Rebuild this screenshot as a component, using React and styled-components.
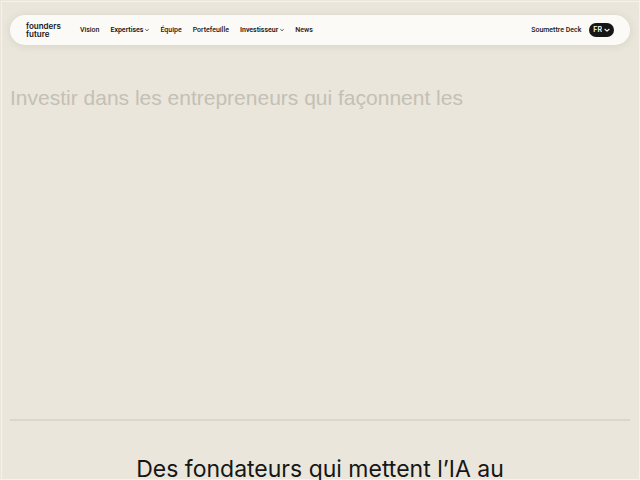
import React from 'react';
import styled, { createGlobalStyle } from 'styled-components'

const GlobalStyle = createGlobalStyle`
  * { box-sizing: border-box; }
  body {
    margin: 0;
    background: #eae6db;
    color: #161616;
    font-family: Inter, 'Liberation Sans', sans-serif;
  }
`

const menu = [
  { label: 'Vision' },
  { label: 'Expertises', sub: true },
  { label: 'Équipe' },
  { label: 'Portefeuille' },
  { label: 'Investisseur', sub: true },
  { label: 'News' },
]

const Chevron = ({ size }) => (
  <svg
    width={size}
    height={size}
    viewBox="0 0 8 8"
    fill="none"
    stroke="currentColor"
    strokeWidth="1.4"
    strokeLinecap="round"
    strokeLinejoin="round"
    aria-hidden="true"
  >
    <path d="M1.2 3L4 5.6L6.8 3" />
  </svg>
)

const App = () => {
  return (
    <Page>
      <GlobalStyle />
      <Header>
        <Logo href="#">
          <span>founders</span>
          <span>future</span>
        </Logo>
        <Nav>
          {menu.map(item => (
            item.sub ? (
              <NavButton key={item.label} type="button">
                {item.label}
                <Chevron size={4} />
              </NavButton>
            ) : (
              <NavLink key={item.label} href="#">{item.label}</NavLink>
            )
          ))}
        </Nav>
        <NavLink href="#">Soumettre Deck</NavLink>
        <Language>
          <select aria-label="Langue" defaultValue="FR">
            <option>FR</option>
            <option>EN</option>
          </select>
          <Chevron size={6} />
        </Language>
      </Header>
      <main>
        <Hero>
          <HeroTitle>Investir dans les entrepreneurs qui façonnent les</HeroTitle>
        </Hero>
        <Founders>
          <FoundersTitle>Des fondateurs qui mettent l’IA au</FoundersTitle>
        </Founders>
      </main>
    </Page>
  )
}

export default App;


const Page = styled.div`
  height: 100vh;
  overflow: hidden;
  padding: 15px 10px 0;
  box-shadow: inset 0 -1px #f5f2e6, inset -1px 0 #f5f2e6, inset 1px 1px #eae6db, inset 2px 2px #f5f2e6;
`
const Header = styled.header`
  display: flex;
  align-items: center;
  height: 30px;
  padding: 0 16px;
  border-radius: 15px;
  background: #fbfaf6;
  box-shadow: 0 1px 8px rgba(60, 50, 20, 0.1);
`
const Logo = styled.a`
  display: flex;
  flex-direction: column;
  margin-right: 19px;
  color: #161616;
  font-size: 8px;
  font-weight: 600;
  line-height: 8px;
  text-decoration: none;
`
const Nav = styled.nav`
  display: flex;
  align-items: center;
  gap: 11px;
  flex: 1;
`
const NavLink = styled.a`
  color: #161616;
  font-family: Roboto, sans-serif;
  font-size: 7px;
  font-weight: 500;
  line-height: 10px;
  text-decoration: none;
  white-space: nowrap;
`
const NavButton = styled.button`
  display: flex;
  align-items: center;
  gap: 2px;
  padding: 0;
  border: 0;
  background: none;
  color: #161616;
  font-family: Roboto, sans-serif;
  font-size: 7px;
  font-weight: 600;
  line-height: 10px;
`
const Language = styled.label`
  display: flex;
  align-items: center;
  gap: 2px;
  height: 14px;
  margin-left: 8px;
  padding: 0 4px;
  border-radius: 7px;
  background: #161616;
  color: #fbfaf6;

  select {
    appearance: none;
    field-sizing: content;
    padding: 0;
    border: 0;
    background: none;
    color: inherit;
    font-family: inherit;
    font-size: 7px;
    font-weight: 600;
    line-height: 10px;
  }
`
const Hero = styled.section`
  height: 376px;
  padding-top: 41px;
  border-bottom: 2px solid #dad6cb;
`
const HeroTitle = styled.h1`
  margin: 0;
  color: #c4c0b5;
  font-family: 'Liberation Sans', Arial, sans-serif;
  font-size: 21px;
  font-weight: 400;
  line-height: 24px;
`
const Founders = styled.section`
  padding-top: 35px;
`
const FoundersTitle = styled.h2`
  margin: 0;
  font-size: 23px;
  font-weight: 400;
  line-height: 26px;
  text-align: center;
`
